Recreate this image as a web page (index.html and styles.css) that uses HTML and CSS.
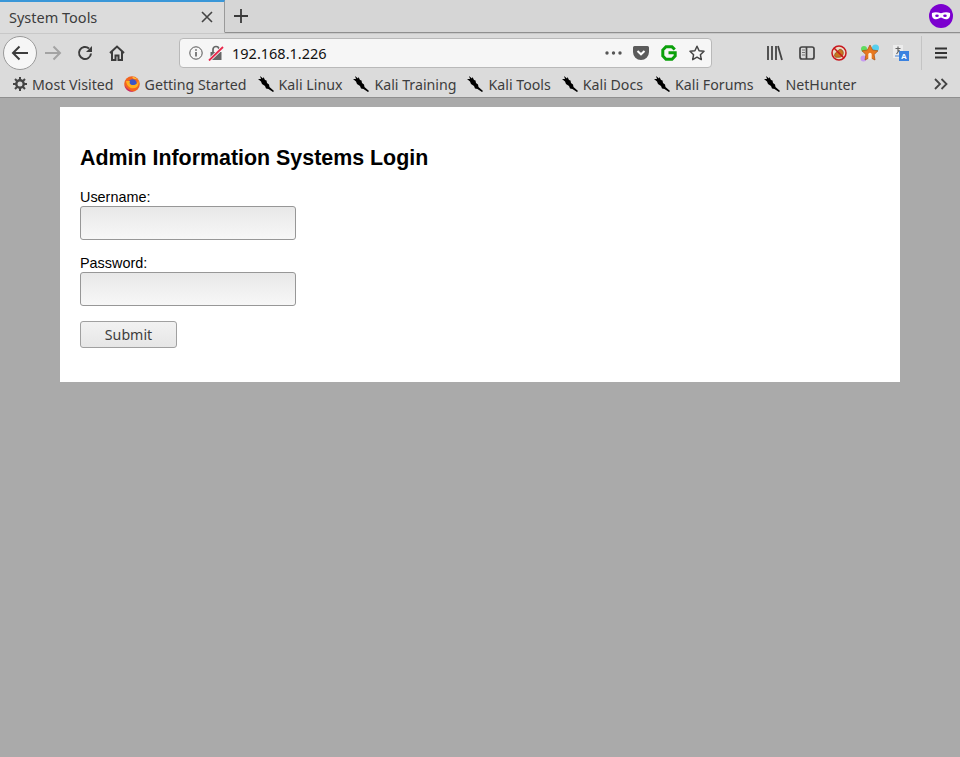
FILE: index.html
```html
<!DOCTYPE html>
<html lang="en">
<head>
<meta charset="utf-8">
<title>System Tools</title>
<link rel="stylesheet" href="styles.css">
</head>
<body>
<header class="chrome">
  <div class="tabstrip">
    <div class="tab">
      <span class="tab-title">System Tools</span>
      <svg class="tab-close" width="12" height="12" viewBox="0 0 12 12"><path d="M1 1l10 10M11 1L1 11" stroke="#444" stroke-width="1.600" fill="none"/></svg>
    </div>
    <svg class="tab-new" width="16" height="16" viewBox="0 0 16 16"><path d="M8 1v14M1 8h14" stroke="#3a3a3a" stroke-width="1.800" fill="none"/></svg>
    <span class="tab-spacer"></span>
    <svg class="mask" width="24" height="24" viewBox="0 0 24 24"><circle cx="12" cy="12" r="12" fill="#7b00cf"/><path d="M3 9c3-1.300 6-.8 9 .3 3-1.100 6-1.600 9-.3.600 3.500-.8 6.300-4 6.300-2.200 0-3.300-1.300-5-1.800-1.700.5-2.800 1.800-5 1.800-3.200 0-4.600-2.800-4-6.300z" fill="#fff"/><ellipse cx="8" cy="11.800" rx="1.800" ry="1.300" fill="#7b00cf"/><ellipse cx="16" cy="11.800" rx="1.800" ry="1.300" fill="#7b00cf"/></svg>
  </div>
  <div class="navbar">
    <button class="back" type="button" aria-label="Back">
      <svg width="18" height="16" viewBox="0 0 18 16"><path d="M17 8H2M8.500 1.500L2 8l6.500 6.500" stroke="#3c3c3c" stroke-width="2" fill="none"/></svg>
    </button>
    <svg class="nav-fwd" width="18" height="16" viewBox="0 0 18 16"><path d="M1 8h15M9.500 1.500L16 8l-6.500 6.500" stroke="#a3a3a3" stroke-width="2" fill="none"/></svg>
    <svg class="nav-reload" width="16" height="16" viewBox="0 0 16 16"><path d="M14 8.500A6 6 0 1 1 12 3.500" stroke="#3c3c3c" stroke-width="2" fill="none"/><path d="M15 1v6H9z" fill="#3c3c3c"/></svg>
    <svg class="nav-home" width="16" height="16" viewBox="0 0 16 16"><path d="M1 8l7-6.500L15 8M3 6.500V15h3.500v-4.500h3V15H13V6.500" stroke="#3c3c3c" stroke-width="2" fill="none"/></svg>
    <div class="urlbar">
      <svg class="url-info" width="14" height="14" viewBox="0 0 14 14"><circle cx="7" cy="7" r="6.200" stroke="#555" fill="none"/><path d="M7 6v4.500M7 3.200v1.600" stroke="#555" stroke-width="1.500"/></svg>
      <svg class="url-lock" width="16" height="16" viewBox="0 0 16 16"><path d="M2.500 7h11v8h-11z" fill="#666"/><path d="M5 7V4.500a3 3 0 0 1 6 0V7" stroke="#666" stroke-width="1.700" fill="none"/><path d="M1 15.500L15 2" stroke="#f6f6f6" stroke-width="3.400"/><path d="M1 15.500L15 2" stroke="#e8274b" stroke-width="1.800"/></svg>
      <span class="url-text">192.168.1.226</span>
      <span class="url-spacer"></span>
      <svg class="url-dots" width="17" height="4" viewBox="0 0 17 4"><circle cx="2" cy="2" r="1.700" fill="#555"/><circle cx="8.500" cy="2" r="1.700" fill="#555"/><circle cx="15" cy="2" r="1.700" fill="#555"/></svg>
      <svg class="url-pocket" width="16" height="14" viewBox="0 0 16 14"><path d="M1.500 0h13A1.500 1.500 0 0 1 16 1.500V6A8 8 0 0 1 0 6V1.500A1.500 1.500 0 0 1 1.500 0z" fill="#5b5b5b"/><path d="M4.500 5L8 8.300 11.500 5" stroke="#fff" stroke-width="2" fill="none"/></svg>
      <svg class="url-g" width="16" height="16" viewBox="0 0 16 16"><path d="M13.800 4.500L11 1.800H5L1.800 5v6L5 14.200h6L14.200 11V7.800H7.500" stroke="#0aa00a" stroke-width="3" fill="none"/></svg>
      <svg class="url-star" width="16" height="16" viewBox="0 0 16 16"><path d="M8 1.200l2.100 4.500 4.900.6-3.600 3.400.9 4.900L8 12.200l-4.300 2.400.9-4.900L1 6.300l4.900-.6z" stroke="#444" stroke-width="1.500" fill="none" stroke-linejoin="round"/></svg>
    </div>
    <div class="tools">
      <svg class="tool-lib" width="16" height="16" viewBox="0 0 16 16"><path d="M1 1v14M5 1v14M9 1v14M11 1l4 14" stroke="#444" stroke-width="1.800" fill="none"/></svg>
      <svg class="tool-side" width="16" height="14" viewBox="0 0 16 14"><rect x="1" y="1" width="14" height="12" rx="2" stroke="#444" stroke-width="1.700" fill="none"/><path d="M3 4h3M3 6.500h3M3 9h3" stroke="#777" stroke-width="1.100"/><path d="M7.500 1v12" stroke="#444" stroke-width="1.700"/></svg>
      <svg class="tool-block" width="16" height="16" viewBox="0 0 16 16"><circle cx="8" cy="8" r="7" fill="#ecd9c4"/><path d="M3.500 11c0-3 2-4 3.500-5 .5-1.500 2-2 3-1.500 1.500.5 2.500 2 2.300 4-.2 2.500-2 3.800-4.300 3.800H4.500z" fill="#c9741f" stroke="#7a4414" stroke-width=".6"/><circle cx="8" cy="8" r="7" stroke="#c8161d" stroke-width="1.500" fill="none"/><path d="M3 3l10 10" stroke="#c8161d" stroke-width="1.500"/></svg>
      <svg class="tool-star" width="20" height="18" viewBox="0 0 20 18"><circle cx="4" cy="5" r="3" fill="#5fdc5f"/><circle cx="15.500" cy="4" r="3.500" fill="#55cfee"/><circle cx="3.500" cy="14.500" r="3" fill="#c59af0"/><path d="M10 1l2.600 5 5.400.8-3.900 3.800.9 5.400-5-2.600L5 16l.9-5.400L2 6.800 7.400 6z" fill="#e8781e" stroke="#a9500f" stroke-width=".7"/><path d="M8.300 15v-4.500a1.700 1.700 0 0 1 3.400 0V15z" fill="#fff0dc"/></svg>
      <svg class="tool-trans" width="16" height="16" viewBox="0 0 16 16"><rect x="0" y="0" width="10" height="13" fill="#ececec"/><path d="M2.500 3.500h5M5 1.500v5M3.500 9L6.500 5" stroke="#666" stroke-width="1.200" fill="none"/><path d="M2 11h4" stroke="#7ea6dc" stroke-width="1.500"/><rect x="6" y="6" width="10" height="10" fill="#3b82e0"/><text class="trans-a" x="11" y="14.300" text-anchor="middle">A</text></svg>
      <span class="tool-sep"></span>
      <svg class="tool-menu" width="12" height="12" viewBox="0 0 12 12"><path d="M0 1.500h12M0 6h12M0 10.500h12" stroke="#333" stroke-width="1.800"/></svg>
    </div>
  </div>
  <nav class="bookmarks">
    <a class="bm"><svg width="14" height="14" viewBox="0 0 14 14"><circle cx="7" cy="7" r="3.700" stroke="#444" stroke-width="2.400" fill="none"/><path d="M7 0v3M7 11v3M0 7h3M11 7h3M2 2l2 2M10 10l2 2M12 2l-2 2M4 10l-2 2" stroke="#444" stroke-width="2"/></svg>Most Visited</a>
    <a class="bm"><svg width="16" height="16" viewBox="0 0 16 16"><circle cx="8" cy="8" r="7.800" fill="#f2641f"/><circle cx="8.500" cy="7.500" r="4.200" fill="#3a56c8"/><path d="M2 5c1 7 7 9 11 6 2-2 2-5 1-7 0 3-2 5-5 5-3 0-4-2-3-4-1 0-3 0-4 0z" fill="#ffb01f"/><path d="M.5 9a7.800 7.800 0 0 0 9.500 6.600C6 15 3 13 .5 9z" fill="#c2267a"/><path d="M8 1c3 0 5 1.500 6 3-1.500-1-3-1.500-4-1z" fill="#ffcf3f"/></svg>Getting Started</a>
    <a class="bm"><svg class="kali" width="18" height="18" viewBox="0 0 18 18"><path d="M1 4L4 4 3 1 6 3.500 6.500 2 8 5 9.500 5.500 10 8 12 9.500 12.500 12 17 16 16 17 11.500 14 9 13.500 8 11 5 9 4 6.500z" fill="#000"/></svg>Kali Linux</a>
    <a class="bm"><svg class="kali" width="18" height="18" viewBox="0 0 18 18"><path d="M1 4L4 4 3 1 6 3.500 6.500 2 8 5 9.500 5.500 10 8 12 9.500 12.500 12 17 16 16 17 11.500 14 9 13.500 8 11 5 9 4 6.500z" fill="#000"/></svg>Kali Training</a>
    <a class="bm"><svg class="kali" width="18" height="18" viewBox="0 0 18 18"><path d="M1 4L4 4 3 1 6 3.500 6.500 2 8 5 9.500 5.500 10 8 12 9.500 12.500 12 17 16 16 17 11.500 14 9 13.500 8 11 5 9 4 6.500z" fill="#000"/></svg>Kali Tools</a>
    <a class="bm"><svg class="kali" width="18" height="18" viewBox="0 0 18 18"><path d="M1 4L4 4 3 1 6 3.500 6.500 2 8 5 9.500 5.500 10 8 12 9.500 12.500 12 17 16 16 17 11.500 14 9 13.500 8 11 5 9 4 6.500z" fill="#000"/></svg>Kali Docs</a>
    <a class="bm"><svg class="kali" width="18" height="18" viewBox="0 0 18 18"><path d="M1 4L4 4 3 1 6 3.500 6.500 2 8 5 9.500 5.500 10 8 12 9.500 12.500 12 17 16 16 17 11.500 14 9 13.500 8 11 5 9 4 6.500z" fill="#000"/></svg>Kali Forums</a>
    <a class="bm"><svg class="kali" width="18" height="18" viewBox="0 0 18 18"><path d="M1 4L4 4 3 1 6 3.500 6.500 2 8 5 9.500 5.500 10 8 12 9.500 12.500 12 17 16 16 17 11.500 14 9 13.500 8 11 5 9 4 6.500z" fill="#000"/></svg>NetHunter</a>
    <span class="bm-spacer"></span>
    <svg class="bm-more" width="14" height="12" viewBox="0 0 14 12"><path d="M1 1l5 5-5 5M7.500 1l5 5-5 5" stroke="#444" stroke-width="1.800" fill="none"/></svg>
  </nav>
</header>
<main class="card">
  <h2>Admin Information Systems Login</h2>
  <form class="login">
    <label class="field">Username:<input type="text"></label>
    <label class="field">Password:<input type="password"></label>
    <button class="submit" type="button">Submit</button>
  </form>
</main>
</body>
</html>
```
FILE: styles.css
```css
* { box-sizing: border-box; }
html, body { margin: 0; height: 100%; }
body { background: #aaa; font-family: "Liberation Sans", Arial, sans-serif; overflow: hidden; }
.chrome { background: #d6d6d6; font-family: "Noto Sans", sans-serif; color: #3d3d3d; }
.tabstrip { height: 33px; display: flex; align-items: center; border-bottom: 1px solid #8f8f8f; }
.tab { width: 225px; height: 33px; display: flex; align-items: center; padding-left: 9px; padding-right: 11px; background: #dcdcdc; border-top: 2px solid #3a97d8; border-right: 1px solid #9a9a9a; border-bottom: 1px solid #dcdcdc; font-size: 14.500px; }
.tab-title { flex: 1; }
.tab-new { margin-left: 8px; }
.tab-spacer { flex: 1; }
.mask { margin-right: 7px; }
.navbar { height: 38px; display: flex; align-items: center; background: #dbdbdb; padding-left: 3px; border-top: 1px solid #c8c8c8; }
.back { width: 34px; height: 34px; border-radius: 50%; border: 1px solid #9a9a9a; background: #f6f6f6; padding: 0; display: flex; align-items: center; justify-content: center; }
.nav-fwd { margin-left: 7px; }
.nav-reload { margin-left: 15px; }
.nav-home { margin-left: 16px; }
.urlbar { width: 533px; height: 30px; margin-left: 54px; background: #f6f6f6; border: 1px solid #b9b9b9; border-radius: 4px; display: flex; align-items: center; padding: 0 6px 0 9px; }
.url-lock { margin-left: 5px; }
.url-text { margin-left: 8px; font-size: 14.500px; color: #111; }
.url-spacer { flex: 1; }
.url-pocket { margin-left: 11px; }
.url-g { margin-left: 12px; }
.url-star { margin-left: 12px; }
.tools { display: flex; align-items: center; margin-left: 55px; }
.tool-side { margin-left: 16px; }
.tool-block { margin-left: 16px; }
.tool-star { margin-left: 13px; }
.tool-trans { margin-left: 13px; }
.trans-a { font: bold 8px "Liberation Sans", sans-serif; fill: #fff; }
.tool-sep { width: 1px; height: 34px; background: #c4c4c4; margin-left: 12px; }
.tool-menu { margin-left: 13px; }
.bookmarks { height: 27px; display: flex; align-items: center; gap: 11px; background: #dbdbdb; padding: 0 12px 0 13px; font-size: 14.200px; border-bottom: 1px solid #8f8f8f; }
.bm { display: flex; align-items: center; gap: 5px; white-space: nowrap; }
.bm:first-child { margin-right: -1px; }
.bm .kali { margin-right: -1px; margin-left: -1px; }
.bm-spacer { flex: 1; }
.card { width: 840px; height: 275px; margin: 9px auto 0; background: #fff; padding: 39px 20px 0; color: #000; }
h2 { margin: 0 0 18px; font-size: 21.400px; line-height: 25px; }
.login { display: flex; flex-direction: column; align-items: flex-start; }
.field { display: block; font-size: 14.400px; line-height: 17px; margin-bottom: 15px; }
.field input { display: block; width: 216px; height: 34px; border: 1px solid #979797; border-radius: 3px; background: linear-gradient(#e8e8e8, #f7f7f7); padding: 0; margin: 0; }
.submit { width: 97px; height: 27px; border: 1px solid #a0a0a0; border-radius: 3px; background: linear-gradient(#f2f2f2, #e6e6e6); font-family: "Noto Sans", sans-serif; font-size: 14.200px; color: #3d3d3d; padding: 0; }
```
